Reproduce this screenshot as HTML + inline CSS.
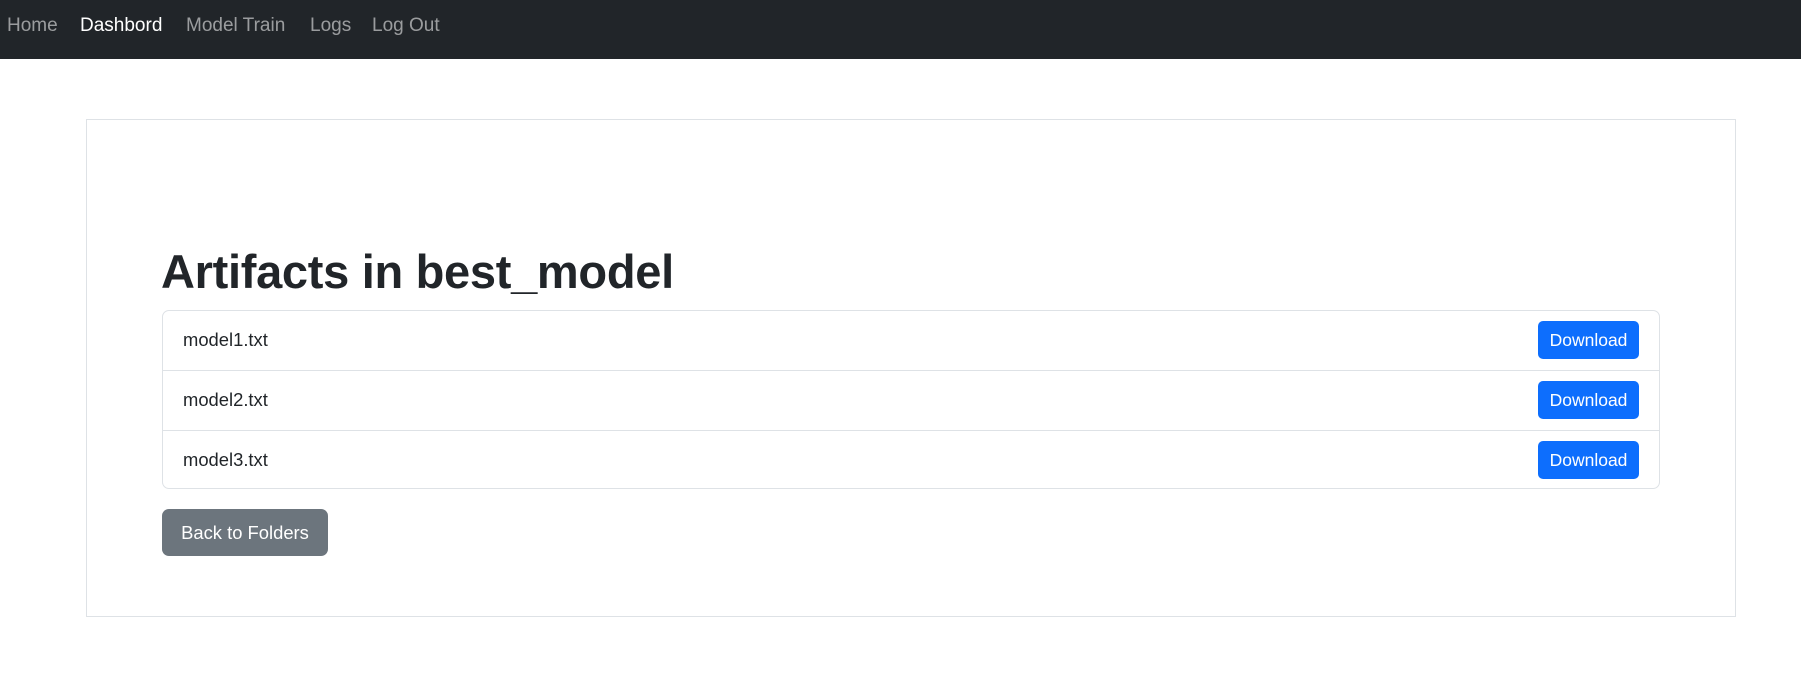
<!DOCTYPE html>
<html><head><meta charset="utf-8"><style>
*{margin:0;padding:0;box-sizing:border-box}
body{width:1801px;height:689px;background:#fff;font-family:"Liberation Sans",sans-serif;color:#212529;position:relative;overflow:hidden}
.nav{position:absolute;left:0;top:0;width:1801px;height:59px;background:#212529}
.nav span{position:absolute;top:14px;font-size:19px;line-height:24px;color:rgba(255,255,255,.55);white-space:nowrap}
.card{position:absolute;left:86px;top:119px;width:1650px;height:498px;border:1px solid #dee2e6}
h1{position:absolute;left:161px;top:242px;font-size:47px;font-weight:bold;line-height:60px;white-space:nowrap;letter-spacing:-0.3px}
.list{position:absolute;left:162px;top:310px;width:1498px;height:179px;border:1px solid #dee2e6;border-radius:7px}
.row{position:absolute;left:0;width:1496px;height:60px;border-top:1px solid #dee2e6}
.row span{position:absolute;left:20px;top:18px;font-size:18.4px}
.btn{position:absolute;left:1375px;top:10px;width:101px;height:38px;background:#0d6efd;color:#fff;border-radius:5px;font-size:17.5px;text-align:center;line-height:38px}
.back{position:absolute;left:162px;top:509px;width:166px;height:47px;background:#6c757d;color:#fff;border-radius:7px;font-size:18.4px;text-align:center;line-height:47px}
</style></head><body>
<div class="nav">
<span style="left:7px">Home</span>
<span style="left:80px;color:#fff">Dashbord</span>
<span style="left:186px">Model Train</span>
<span style="left:310px">Logs</span>
<span style="left:372px">Log Out</span>
</div>
<div class="card"></div>
<h1>Artifacts in best_model</h1>
<div class="list">
<div class="row" style="top:0;border-top:none"><span>model1.txt</span><div class="btn">Download</div></div>
<div class="row" style="top:59px"><span>model2.txt</span><div class="btn">Download</div></div>
<div class="row" style="top:119px"><span>model3.txt</span><div class="btn">Download</div></div>
</div>
<div class="back">Back to Folders</div>
</body></html>
